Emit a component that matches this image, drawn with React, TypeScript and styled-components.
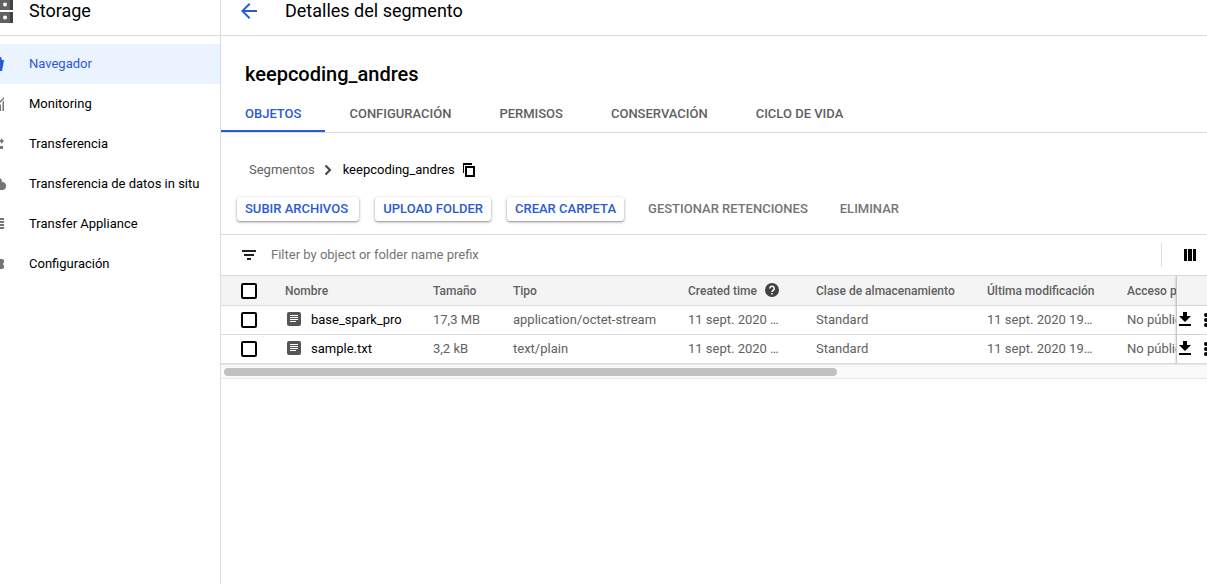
import React from "react";
import styled, { createGlobalStyle, css } from "styled-components";

const blue = "#2a5bd7";
const line = "#dadce0";

const Global = createGlobalStyle`
  *, *::before, *::after { box-sizing: border-box; }
  body { margin: 0; background: #fff; color: #000; font-family: Roboto, "Liberation Sans", sans-serif; font-size: 13px; line-height: 20px; }
  svg { display: block; flex: none; }
  button { font: inherit; color: inherit; background: none; border: 0; padding: 0; }
  a { color: inherit; text-decoration: none; }
`;

const Shell = styled.div`
  display: grid;
  grid-template-columns: 221px minmax(0, 1fr);
  min-height: 100vh;
`;

const Sidebar = styled.aside`
  border-right: 1px solid ${line};
`;

const TopBar = styled.header`
  display: flex;
  align-items: center;
  height: 36px;
  padding-bottom: 13px;
  border-bottom: 1px solid ${line};
  font-size: 18px;
  line-height: 24px;
`;

const ProductBar = styled(TopBar)`
  gap: 16px;
`;

const PageBar = styled(TopBar)`
  gap: 24px;
  padding-left: 16px;
`;

const BarTitle = styled.span`
  font-weight: 400;
`;

const Nav = styled.nav`
  display: flex;
  flex-direction: column;
  padding-top: 8px;
`;

const NavLink = styled.a<{ $active?: boolean }>`
  display: flex;
  align-items: center;
  height: 40px;
  gap: 17px;
  color: ${(p) => (p.$active ? blue : "#000")};
  background: ${(p) => (p.$active ? "#ebf3fe" : "transparent")};
  svg { color: ${(p) => (p.$active ? blue : "#757575")}; }
`;

const Main = styled.main`
  min-width: 0;
`;

const Heading = styled.h1`
  margin: 0;
  padding: 24px 24px 8px;
  font-size: 20px;
  line-height: 28px;
  font-weight: 500;
`;

const Tabs = styled.div`
  display: flex;
  height: 37px;
  border-bottom: 1px solid ${line};
`;

const Tab = styled.button<{ $active?: boolean }>`
  height: 36px;
  padding: 2px 24px 0;
  border-bottom: 2px solid ${(p) => (p.$active ? blue : "transparent")};
  color: ${(p) => (p.$active ? blue : "#5f5f5f")};
  font-weight: 500;
`;

const Crumbs = styled.nav`
  display: flex;
  align-items: center;
  height: 20px;
  margin: 27px 28px 0;
  gap: 8px;
`;

const CrumbLink = styled.a`
  color: #616161;
`;

const IconButton = styled.button`
  display: flex;
  align-items: center;
  justify-content: center;
`;

const Actions = styled.div`
  display: flex;
  gap: 16px;
  padding: 17px 16px 13px;
  border-bottom: 1px solid ${line};
`;

const Action = styled.button<{ $flat?: boolean }>`
  height: 24px;
  padding: 0 8px;
  border-radius: 3px;
  font-weight: 500;
  line-height: 24px;
  ${(p) =>
    p.$flat
      ? css`color: #757575;`
      : css`
          color: ${blue};
          box-shadow: 0 1px 2px rgba(0, 0, 0, 0.36), 0 1px 4px rgba(0, 0, 0, 0.14);
        `}
`;

const FilterBar = styled.div`
  display: flex;
  align-items: center;
  height: 40px;
  padding-left: 20px;
  gap: 14px;
`;

const FilterInput = styled.input`
  flex: 1;
  min-width: 0;
  border: 0;
  padding: 0;
  outline: 0;
  font: inherit;
  background: none;
  &::placeholder { color: #757575; opacity: 1; }
`;

const ColumnsBox = styled.div`
  display: flex;
  align-items: center;
  justify-content: center;
  width: 46px;
  height: 24px;
  padding-left: 11px;
  border-left: 1px solid #e0e0e0;
`;

const TableScroller = styled.div`
  overflow: hidden;
  border-top: 1px solid ${line};
`;

const Table = styled.table`
  width: 160%;
  table-layout: fixed;
  border-collapse: separate;
  border-spacing: 0;
`;

const Col = styled.col<{ $w?: number }>`
  ${(p) => p.$w && css`width: ${p.$w}px;`}
`;

const cell = css`
  padding: 0 8px;
  text-align: left;
  white-space: nowrap;
  overflow: hidden;
  text-overflow: ellipsis;
  border-bottom: 1px solid ${line};
`;

const Th = styled.th`
  ${cell}
  height: 30px;
  background: #f4f4f4;
  color: #616161;
  font-size: 12px;
  font-weight: 500;
`;

const Td = styled.td`
  ${cell}
  height: 29px;
  color: #616161;
`;

const sticky = css`
  position: sticky;
  right: 0;
  padding: 0;
  border-left: 1px solid #c8c8c8;
  text-overflow: clip;
  box-shadow: -1px 0 2px rgba(0, 0, 0, 0.12);
`;

const StickyTh = styled(Th)`${sticky}`;
const StickyTd = styled(Td)`
  ${sticky}
  background: #fff;
`;

const Inline = styled.div`
  display: flex;
  align-items: center;
  gap: 8px;
`;

const ObjectLink = styled.a`
  color: #000;
`;

const Check = styled.input`
  appearance: none;
  display: block;
  width: 16px;
  height: 16px;
  margin: 0 0 0 12px;
  border: 2px solid #000;
  border-radius: 2px;
  background: #fff;
`;

const RowActions = styled.div`
  display: flex;
  align-items: center;
  gap: 12px;
  padding-left: 1px;
`;

const Track = styled.div`
  height: 15px;
  padding: 3px;
  background: #fafafa;
  border-top: 1px solid #e4e4e4;
  border-bottom: 1px solid #e8e8e8;
`;

const Thumb = styled.div`
  width: 62.5%;
  height: 8px;
  border-radius: 4px;
  background: #c1c1c1;
`;

const navItems = [
  { label: "Navegador", icon: <path d="M0 3h1l1 3h2l-1 6-1 5H0z" /> },
  { label: "Monitoring", icon: <path d="M4 3v2L0 9V7zM0 11l1-1v7H0zM2.5 8L4 6.500V17H2.500z" /> },
  { label: "Transferencia", icon: <path d="M0 6h1V4l3 3-3 3V8H0zM0 12h3v3H0z" /> },
  { label: "Transferencia de datos in situ", icon: <path d="M0 4q2 1 2 4 4 0 4 4t-4 4H0z" /> },
  { label: "Transfer Appliance", icon: <path d="M0 4h4v2H0zM0 7h4v2H0zM0 10h4v2H0zM0 13h4v2H0z" /> },
  { label: "Configuración", icon: <path d="M0 5h2l2 1v2l-1 2 1 2v2l-2 1H0z" /> },
];

const tabs = ["OBJETOS", "CONFIGURACIÓN", "PERMISOS", "CONSERVACIÓN", "CICLO DE VIDA"];
const widths = [56, 148, 80, 175, 128, 171, 140];
const files = [
  { name: "base_spark_pro", size: "17,3 MB", type: "application/octet-stream" },
  { name: "sample.txt", size: "3,2 kB", type: "text/plain" },
];

const FileIcon = () => (
  <svg width="18" height="18" viewBox="0 0 18 18">
    <rect x="2" y="1" width="14" height="14" rx="2" fill="#555" />
    <path d="M5 4.500h8M5 6.500h8M5 8.500h8M5 10.500h6" stroke="#fff" />
  </svg>
);

export default function App() {
  return (
    <>
      <Global />
      <Shell>
        <Sidebar>
          <ProductBar>
            <svg width="13" height="24" viewBox="0 0 13 24">
              <path d="M0 0h13v11H0zM0 13h13v11H0z" fill="#616161" />
              <path d="M10 0h3v11h-3zM10 13h3v11h-3z" fill="#424242" />
              <circle cx="5" cy="5.500" r="2" fill="#fff" />
              <circle cx="5" cy="18.500" r="2" fill="#fff" />
            </svg>
            <BarTitle>Storage</BarTitle>
          </ProductBar>
          <Nav aria-label="Storage">
            {navItems.map((n, i) => (
              <NavLink href="#" key={n.label} $active={i === 0}>
                <svg width="12" height="20" viewBox="0 0 12 20" fill="currentColor">{n.icon}</svg>
                {n.label}
              </NavLink>
            ))}
          </Nav>
        </Sidebar>
        <Main>
          <PageBar>
            <IconButton aria-label="Volver">
              <svg width="24" height="24" viewBox="0 0 24 24" fill={blue}>
                <path d="M20 11H7.8l5.6-5.6L12 4l-8 8 8 8 1.4-1.4L7.8 13H20z" />
              </svg>
            </IconButton>
            <BarTitle>Detalles del segmento</BarTitle>
          </PageBar>
          <Heading>keepcoding_andres</Heading>
          <Tabs role="tablist">
            {tabs.map((t, i) => (
              <Tab key={t} role="tab" aria-selected={i === 0} $active={i === 0}>{t}</Tab>
            ))}
          </Tabs>
          <Crumbs aria-label="Ruta">
            <CrumbLink href="#">Segmentos</CrumbLink>
            <svg width="12" height="12" viewBox="0 0 12 12" fill="none" stroke="#424242" strokeWidth="2">
              <path d="M2.500 1.500L7 6l-4.500 4.500" />
            </svg>
            <span>keepcoding_andres</span>
            <IconButton aria-label="Copiar">
              <svg width="12" height="14" viewBox="0 0 12 14" fill="none" stroke="#000" strokeWidth="2">
                <path d="M0 10V1h9" />
                <path d="M3 4h8v9H3z" />
              </svg>
            </IconButton>
          </Crumbs>
          <Actions>
            <Action>SUBIR ARCHIVOS{"\u00a0"}</Action>
            <Action>UPLOAD FOLDER</Action>
            <Action>CREAR CARPETA</Action>
            <Action $flat>GESTIONAR RETENCIONES</Action>
            <Action $flat>ELIMINAR</Action>
          </Actions>
          <FilterBar>
            <svg width="16" height="16" viewBox="0 0 16 16">
              <path d="M1 4h14M3 8h10M6 12h4" stroke="#212121" strokeWidth="2" />
            </svg>
            <FilterInput aria-label="Filtrar" placeholder="Filter by object or folder name prefix" />
            <ColumnsBox>
              <IconButton aria-label="Columnas">
                <svg width="12" height="12" viewBox="0 0 12 12">
                  <path d="M0 0h3v12H0zM4 0h4v12H4zM9 0h3v12H9z" />
                </svg>
              </IconButton>
            </ColumnsBox>
          </FilterBar>
          <TableScroller>
            <Table>
              <colgroup>
                {widths.map((w, i) => <Col key={i} $w={w} />)}
                <Col />
                <Col $w={31} />
              </colgroup>
              <thead>
                <tr>
                  <Th><Check type="checkbox" aria-label="Seleccionar todo" /></Th>
                  <Th>Nombre</Th>
                  <Th>Tamaño</Th>
                  <Th>Tipo</Th>
                  <Th>
                    <Inline>
                      Created time
                      <svg width="14" height="16" viewBox="0 0 14 16">
                        <circle cx="7" cy="7" r="7" fill="#424242" />
                        <path d="M4.8 5.400a2.200 2.200 0 1 1 3.300 1.900Q7 8 7 9M7 10v1.500" fill="none" stroke="#fff" strokeWidth="1.5" />
                      </svg>
                    </Inline>
                  </Th>
                  <Th>Clase de almacenamiento</Th>
                  <Th>Última modificación</Th>
                  <Th>Acceso público</Th>
                  <StickyTh />
                </tr>
              </thead>
              <tbody>
                {files.map((f) => (
                  <tr key={f.name}>
                    <Td><Check type="checkbox" aria-label={f.name} /></Td>
                    <Td><Inline><FileIcon /><ObjectLink href="#">{f.name}</ObjectLink></Inline></Td>
                    <Td>{f.size}</Td>
                    <Td>{f.type}</Td>
                    <Td>11 sept. 2020 …</Td>
                    <Td>Standard</Td>
                    <Td>11 sept. 2020 19…</Td>
                    <Td>No público</Td>
                    <StickyTd>
                      <RowActions>
                        <IconButton aria-label="Descargar">
                          <svg width="14" height="16" viewBox="0 0 14 16">
                            <path d="M5 0h4v4h4L7 10 1 4h4zM1 12h12v2H1z" />
                          </svg>
                        </IconButton>
                        <IconButton aria-label="Más acciones">
                          <svg width="4" height="14" viewBox="0 0 4 14">
                            <circle cx="2" cy="2" r="2" /><circle cx="2" cy="7" r="2" /><circle cx="2" cy="12" r="2" />
                          </svg>
                        </IconButton>
                      </RowActions>
                    </StickyTd>
                  </tr>
                ))}
              </tbody>
            </Table>
          </TableScroller>
          <Track><Thumb /></Track>
        </Main>
      </Shell>
    </>
  );
}
